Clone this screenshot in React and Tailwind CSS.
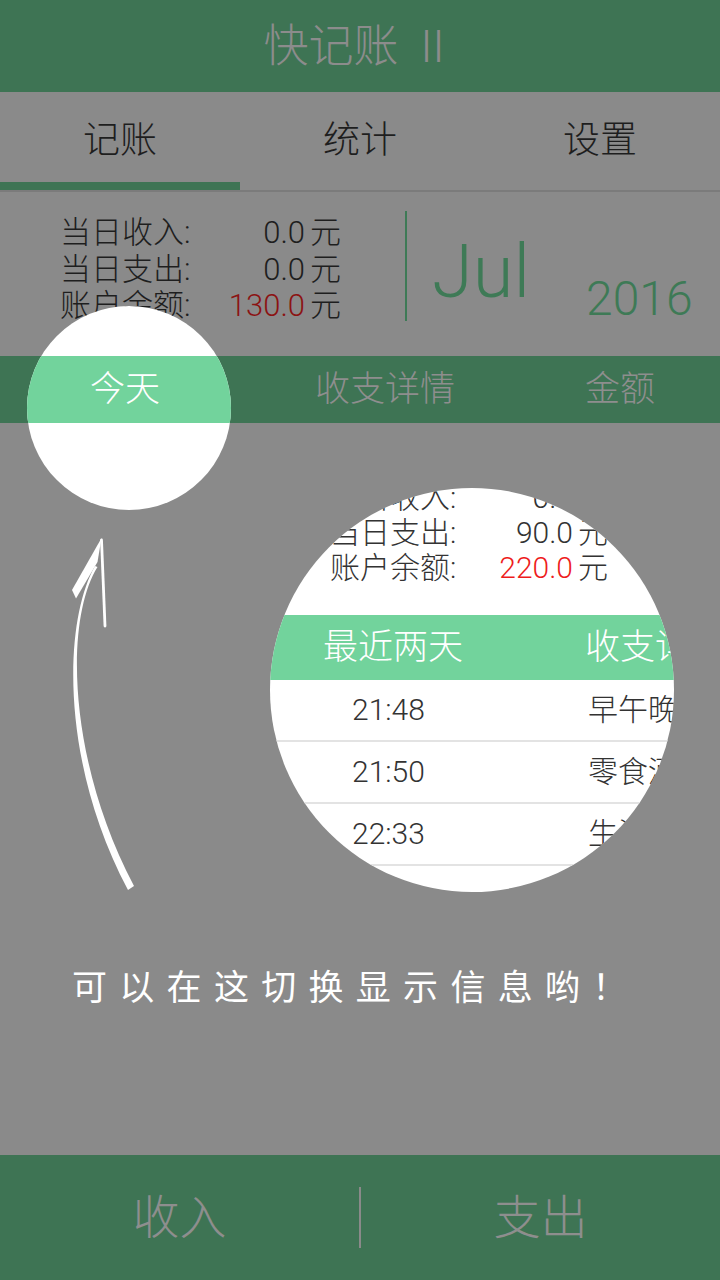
import React from "react";

const CJK = { fontFamily: 'Roboto, "Noto Sans CJK SC", sans-serif' };

function Arrow() {
  return (
    <svg
      className="absolute left-[60px] top-[530px]"
      width="90"
      height="370"
      viewBox="60 530 90 370"
    >
      <polygon points="101.5,538 72,590 76,598.5 97.5,562" fill="#ffffff" />
      <line x1="101.5" y1="540" x2="105" y2="626" stroke="#ffffff" strokeWidth="2.8" strokeLinecap="round" />
      <path
        d="M 95 566 C 64 620, 59 760, 128 890 L 134 886 C 67.5 760, 64.5 620, 97.5 567 Z"
        fill="#ffffff"
      />
    </svg>
  );
}

function SummaryRow({ label, value, red, redClass, labelW, valW }) {
  return (
    <div className="flex items-center">
      <span className={labelW}>{label}</span>
      <span className={`${valW} text-right ${red ? redClass : ""}`}>{value}</span>
      <span className="ml-[5px]">元</span>
    </div>
  );
}

export default function App() {
  return (
    <div
      className="relative w-[720px] h-[1280px] overflow-hidden bg-[#8a8a8a] flex flex-col font-light"
      style={CJK}
    >
      {/* Header */}
      <div className="h-[92px] bg-[#3e7454] flex items-center justify-center pr-[12px] text-[45px] text-[#8c8c8c] leading-none">
        <span>快记账</span>
        <span className="ml-[22px]" style={{ fontFamily: "Roboto, sans-serif" }}>II</span>
      </div>

      {/* Tabs */}
      <div className="h-[90px] grid grid-cols-3 items-center text-[37px] text-[#1e1e1e] leading-none">
        <div className="text-center pt-[6px]">记账</div>
        <div className="text-center pt-[6px]">统计</div>
        <div className="text-center pt-[6px]">设置</div>
      </div>
      <div className="h-[8px] flex">
        <div className="w-[240px] bg-[#3e7454]" />
      </div>
      <div className="h-[2px] bg-[#7b7b7b]" />

      {/* Summary */}
      <div className="h-[164px] flex">
        <div className="pl-[60px] pt-[23px] text-[31px] leading-[36.5px] text-[#1e1e1e] w-[405px]">
          <SummaryRow label="当日收入:" value="0.0" labelW="w-[134px]" valW="w-[111px]" />
          <SummaryRow label="当日支出:" value="0.0" labelW="w-[134px]" valW="w-[111px]" />
          <SummaryRow label="账户余额:" value="130.0" red redClass="text-[#8c1313]" labelW="w-[134px]" valW="w-[111px]" />
        </div>
        <div className="w-[2px] h-[110px] mt-[19px] bg-[#3e7a56]" />
        <div
          className="ml-[25px] mt-[43px] text-[74px] leading-none text-[#3e7a56] font-light"
          style={{ fontFamily: "Roboto, sans-serif" }}
        >
          Jul
        </div>
        <div
          className="ml-[56px] mt-[83px] text-[48px] leading-none text-[#3e7a56] font-light"
          style={{ fontFamily: "Roboto, sans-serif" }}
        >
          2016
        </div>
      </div>

      {/* Green switch bar */}
      <div className="h-[67px] bg-[#3e7454] flex items-center text-[35px] leading-none text-[#8e8e8e]">
        <div className="w-[250px] shrink-0 text-center">今天</div>
        <div className="w-[270px] shrink-0 text-center">收支详情</div>
        <div className="flex-1 text-center">金额</div>
      </div>

      {/* Middle area */}
      <div className="flex-1 pl-[72px] pt-[546px]">
        <div className="text-[35px] leading-[40px] tracking-[12.3px] text-white font-normal">
          可以在这切换显示信息哟！
        </div>
      </div>

      {/* Bottom bar */}
      <div className="h-[125px] bg-[#3e7454] flex items-center text-[47px] leading-none text-[#8e8e8e]">
        <div className="flex-1 text-center">收入</div>
        <div className="w-[2px] h-[61px] bg-[#8a8a8a]" />
        <div className="flex-1 text-center">支出</div>
      </div>

      {/* Spotlight 1 */}
      <div className="absolute left-[27px] top-[306px] w-[204px] h-[204px] rounded-full overflow-hidden bg-white">
        <div className="mt-[50px] h-[67px] bg-[#72d39c] flex items-center">
          <div className="ml-[-27px] w-[250px] shrink-0 text-center text-[35px] leading-none text-white">今天</div>
        </div>
      </div>

      {/* Spotlight 2 (magnified example) */}
      <div className="absolute left-[270px] top-[488px] w-[404px] h-[404px] rounded-full overflow-hidden bg-white">
        <div className="w-[600px]">
          <div className="mt-[-8px] pl-[60px] text-[30px] leading-[35px] text-[#333333]">
            <SummaryRow label="当日收入:" value="0.0" labelW="w-[132px]" valW="w-[111px]" />
            <SummaryRow label="当日支出:" value="90.0" labelW="w-[132px]" valW="w-[111px]" />
            <SummaryRow label="账户余额:" value="220.0" red redClass="text-[#ee1c1c]" labelW="w-[132px]" valW="w-[111px]" />
          </div>
          <div className="mt-[30px] h-[65px] bg-[#72d39c] flex items-center text-[35px] leading-none text-white">
            <div className="pl-[53px] w-[315px] shrink-0">最近两天</div>
            <div>收支详情</div>
          </div>
          {[
            ["21:48", "早午晚餐"],
            ["21:50", "零食酒水"],
            ["22:33", "生活用品"],
          ].map(([t, d]) => (
            <div
              key={t}
              className="h-[62px] border-b-2 border-[#e3e3e3] flex items-center text-[30px] leading-none text-[#333333]"
            >
              <div className="pl-[82px] w-[318px] shrink-0">{t}</div>
              <div>{d}</div>
            </div>
          ))}
        </div>
      </div>

      <Arrow />
    </div>
  );
}
